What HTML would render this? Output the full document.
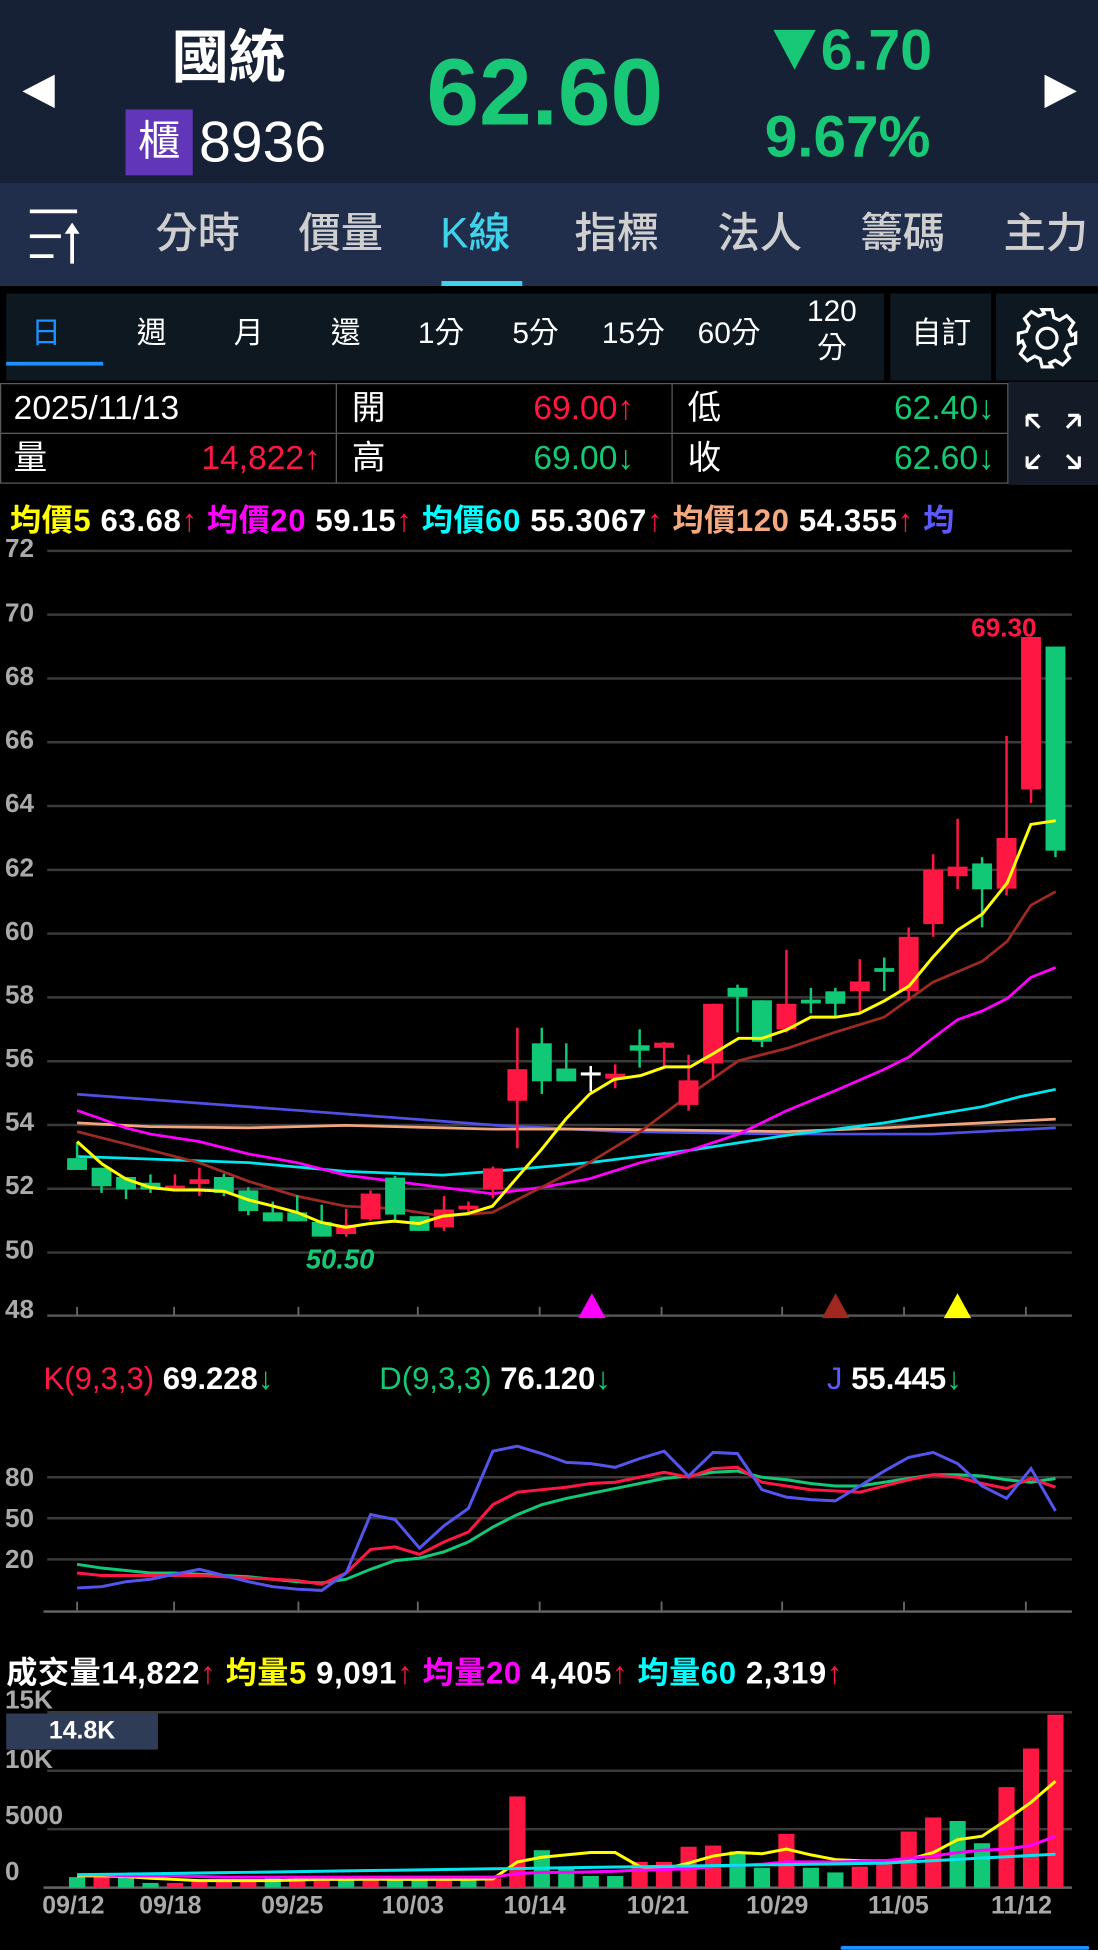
<!DOCTYPE html>
<html><head><meta charset="utf-8">
<style>
*{margin:0;padding:0;box-sizing:border-box}
html,body{width:1098px;height:1950px;background:#000;overflow:hidden}
#root{position:absolute;left:0;top:0;width:883px;height:1568px;transform:scale(1.24349);transform-origin:0 0;background:#000;font-family:"Liberation Sans","Noto Sans CJK TC",sans-serif;color:#fff}
.a{position:absolute;white-space:nowrap}
.hd{left:0;top:0;width:883px;height:147px;background:#172135}
.tb{left:0;top:147px;width:883px;height:83px;background:#202d4b}
.tab{top:164px;font-size:34px;color:#cfcfcf;line-height:48px;font-weight:500}
.sb{top:236px;height:70px;background:#0e1821}
.si{top:253px;font-size:24px;color:#fff;line-height:32px;text-align:center}
.cell{height:41px;border:1px solid #5a5a5a;background:#000;font-size:27px;line-height:39px}
.g{color:#16c874}.r{color:#ff1744}
.yl{font-size:21px;color:#aaa;font-weight:bold;left:4px}
</style></head><body>
<div id="root">
<div class="a hd"></div>
<svg class="a" style="left:18px;top:60px" width="28" height="28"><polygon points="26,0 26,27 0,13.5" fill="#fff"/></svg>
<svg class="a" style="left:838px;top:60px" width="28" height="28"><polygon points="2,0 2,27 28,13.5" fill="#fff"/></svg>
<div class="a" style="left:138px;top:16px;font-size:46px;line-height:60px;font-weight:bold">國統</div>
<div class="a" style="left:101px;top:88px;width:54px;height:53px;background:#6236b8;font-size:34px;line-height:53px;text-align:center">櫃</div>
<div class="a" style="left:160px;top:84px;font-size:46px;line-height:60px;font-weight:500">8936</div>
<div class="a" style="left:343px;top:30px;font-size:76px;line-height:90px;font-weight:bold;color:#19c877">62.60</div>
<svg class="a" style="left:622px;top:22px" width="36" height="36"><polygon points="0,2 34,2 17,34" fill="#19c877"/></svg>
<div class="a" style="left:660px;top:12px;font-size:46px;line-height:56px;font-weight:bold;color:#19c877">6.70</div>
<div class="a" style="left:615px;top:82px;font-size:47px;line-height:56px;font-weight:bold;color:#19c877">9.67%</div>

<div class="a tb"></div>
<svg class="a" style="left:18px;top:168px" width="50" height="45"><g stroke="#fff" stroke-width="3"><line x1="6" y1="2" x2="44" y2="2"/><line x1="6" y1="22" x2="31" y2="22"/><line x1="6" y1="38" x2="25" y2="38"/><line x1="40" y1="16" x2="40" y2="44"/></g><polygon points="34,20 40,11 46,20" fill="#fff"/></svg>
<div class="a tab" style="left:125px">分時</div>
<div class="a tab" style="left:240px">價量</div>
<div class="a tab" style="left:354px;color:#3fd3ea">K線</div>
<div class="a tab" style="left:462px">指標</div>
<div class="a tab" style="left:577px">法人</div>
<div class="a tab" style="left:692px">籌碼</div>
<div class="a tab" style="left:807px">主力</div>
<div class="a" style="left:355px;top:226px;width:65px;height:4px;background:#3fd3ea"></div>

<div class="a sb" style="left:5px;width:706px"></div>
<div class="a sb" style="left:716px;width:81px"></div>
<div class="a sb" style="left:801px;width:82px"></div>
<div class="a si" style="left:25px;color:#1e90ff">日</div>
<div class="a si" style="left:110px">週</div>
<div class="a si" style="left:188px">月</div>
<div class="a si" style="left:266px">還</div>
<div class="a si" style="left:336px">1分</div>
<div class="a si" style="left:412px">5分</div>
<div class="a si" style="left:484px">15分</div>
<div class="a si" style="left:561px">60分</div>
<div class="a" style="left:645px;top:236px;font-size:24px;line-height:30px;text-align:center;width:48px">120<br>分</div>
<div class="a si" style="left:733px">自訂</div>
<div class="a" style="left:5px;top:291px;width:78px;height:3px;background:#1e90ff"></div>
<svg class="a" style="left:816px;top:246px" width="52" height="52" viewBox="0 0 52 52"><g fill="none" stroke="#fff" stroke-width="2.6"><path d="M22 3h8l1.5 6.5 4.5 2 5.8-3.6 5.6 5.6-3.6 5.8 2 4.5L49 22v8l-6.5 1.5-2 4.5 3.6 5.8-5.6 5.6-5.8-3.6-4.5 2L30 49h-8l-1.5-6.5-4.5-2-5.8 3.6-5.6-5.6 3.6-5.8-2-4.5L3 30v-8l6.5-1.5 2-4.5-3.6-5.8 5.6-5.6 5.8 3.6 4.5-2z"/><circle cx="26" cy="26" r="8"/></g></svg>

<div class="a cell" style="left:0;top:308px;width:271px;padding-left:10px">2025/11/13</div>
<div class="a cell" style="left:270px;top:308px;width:271px;padding-left:12px">開<span class="a r" style="right:30px;top:0">69.00↑</span></div>
<div class="a cell" style="left:540px;top:308px;width:271px;padding-left:12px">低<span class="a g" style="right:10px;top:0">62.40↓</span></div>
<div class="a cell" style="left:0;top:348px;width:271px;padding-left:10px">量<span class="a r" style="right:12px;top:0">14,822↑</span></div>
<div class="a cell" style="left:270px;top:348px;width:271px;padding-left:12px">高<span class="a g" style="right:30px;top:0">69.00↓</span></div>
<div class="a cell" style="left:540px;top:348px;width:271px;padding-left:12px">收<span class="a g" style="right:10px;top:0">62.60↓</span></div>
<div class="a" style="left:811px;top:307px;width:72px;height:83px;background:#141b27"></div>
<svg class="a" style="left:822px;top:330px" width="50" height="50"><g stroke="#fff" stroke-width="2.5" fill="none"><path d="M4 4l10 10M4 4v9M4 4h9"/><path d="M46 4l-10 10M46 4v9M46 4h-9"/><path d="M4 46l10-10M4 46v-9M4 46h9"/><path d="M46 46l-10-10M46 46v-9M46 46h-9"/></g></svg>

<div class="a" style="left:8px;top:404px;font-size:25px;line-height:30px;font-weight:bold;letter-spacing:0.5px"><span style="color:#ffff00">均價5</span> 63.68<span class="r">↑</span> <span style="color:#ff00ff">均價20</span> 59.15<span class="r">↑</span> <span style="color:#00ffff">均價60</span> 55.3067<span class="r">↑</span> <span style="color:#f5a97f">均價120</span> 54.355<span class="r">↑</span> <span style="color:#5a5aff">均</span></div>

<svg id="ch" class="a" style="left:0;top:0" width="883" height="1568"></svg>

<div class="a yl" style="top:430px">72</div>
<div class="a yl" style="top:482px">70</div>
<div class="a yl" style="top:533px">68</div>
<div class="a yl" style="top:584px">66</div>
<div class="a yl" style="top:635px">64</div>
<div class="a yl" style="top:687px">62</div>
<div class="a yl" style="top:738px">60</div>
<div class="a yl" style="top:789px">58</div>
<div class="a yl" style="top:840px">56</div>
<div class="a yl" style="top:891px">54</div>
<div class="a yl" style="top:942px">52</div>
<div class="a yl" style="top:994px">50</div>
<div class="a yl" style="top:1042px">48</div>
<div class="a" style="left:781px;top:494px;font-size:21px;font-weight:bold;color:#ff1744">69.30</div>
<div class="a" style="left:246px;top:1000px;font-size:22px;font-weight:bold;font-style:italic;color:#16c874">50.50</div>

<div class="a" style="left:35px;top:1094px;font-size:25px;line-height:30px"><span class="r">K(9,3,3)</span> <b>69.228</b><span class="g">↓</span></div>
<div class="a" style="left:305px;top:1094px;font-size:25px;line-height:30px"><span class="g">D(9,3,3)</span> <b>76.120</b><span class="g">↓</span></div>
<div class="a" style="left:665px;top:1094px;font-size:25px;line-height:30px"><span style="color:#5a5aff">J</span> <b>55.445</b><span class="g">↓</span></div>
<div class="a yl" style="top:1177px">80</div>
<div class="a yl" style="top:1210px">50</div>
<div class="a yl" style="top:1243px">20</div>

<div class="a" style="left:5px;top:1331px;font-size:25px;line-height:30px;font-weight:bold;letter-spacing:0.5px">成交量14,822<span class="r">↑</span> <span style="color:#ffff00">均量5</span> 9,091<span class="r">↑</span> <span style="color:#ff00ff">均量20</span> 4,405<span class="r">↑</span> <span style="color:#00ffff">均量60</span> 2,319<span class="r">↑</span></div>
<div class="a yl" style="top:1356px">15K</div>
<div class="a yl" style="top:1404px">10K</div>
<div class="a yl" style="top:1449px">5000</div>
<div class="a yl" style="top:1494px">0</div>
<div class="a" style="left:5px;top:1378px;width:122px;height:29px;background:#2e3c57;color:#fff;font-size:20px;font-weight:bold;line-height:29px;text-align:center">14.8K</div>
<div class="a" style="left:0;top:1520px;width:883px;font-size:20px;font-weight:bold;color:#aaa;line-height:26px">
<span class="a" style="left:34px">09/12</span><span class="a" style="left:112px">09/18</span><span class="a" style="left:210px">09/25</span><span class="a" style="left:307px">10/03</span><span class="a" style="left:405px">10/14</span><span class="a" style="left:504px">10/21</span><span class="a" style="left:600px">10/29</span><span class="a" style="left:698px">11/05</span><span class="a" style="left:797px">11/12</span></div>
<div class="a" style="left:676px;top:1565px;width:200px;height:3px;background:#1e90ff;border-radius:2px"></div>
</div>
<script>
(function(){
var X=function(i){return 62+i*19.67};
var P=function(p){return 443+(72-p)*25.65};
var s='';
for(var v=72;v>=50;v-=2){s+='<line x1="38" x2="862" y1="'+P(v)+'" y2="'+P(v)+'" stroke="#3a3a3a" stroke-width="2"/>';}
s+='<line x1="38" x2="862" y1="1058" y2="1058" stroke="#555" stroke-width="2"/>';
var tk=[62,140,240,336,434,532,629,727,825];
tk.forEach(function(x){s+='<line x1="'+x+'" x2="'+x+'" y1="1051" y2="1058" stroke="#666" stroke-width="1.5"/>';});
function pl(pts,c,w){s+='<polyline fill="none" stroke="'+c+'" stroke-width="'+(w||2.2)+'" points="'+pts+'"/>';}
pl("62,880 240,893 400,905 500,910 633,912 750,912 849,907","#5050e6");
pl("62,903 120,906 200,907 278,905 396,908 474,908 633,910 711,907 790,903 849,900","#f0a57c");
pl("62,930 200,935 278,942 356,945 396,942 474,935 555,925 633,913 711,903 790,890 820,882 849,876","#00e5ee");
pl("62,893 82,900 101,907 121,912 160,918 200,928 239,935 278,945 317,950 356,955 396,960 435,955 474,948 515,935 555,925 594,912 633,893 672,877 711,860 731,850 750,835 770,820 790,813 810,803 829,786 849,778","#ff00ff");
pl("62,910 121,925 160,935 200,950 239,962 278,970 317,972 356,978 396,975 435,955 474,935 515,910 555,880 594,853 633,843 672,830 711,818 750,790 790,773 810,757 829,728 849,717","#9e2a22");
var C=[[52.96,53.45,52.59,52.59],[52.66,52.66,51.87,52.08],[52.37,52.37,51.68,51.98],[52.19,52.45,51.87,51.98],[52.0,52.45,51.98,52.05],[52.2,52.66,51.77,52.25],[52.37,52.47,51.77,51.87],[51.95,52.05,51.17,51.3],[51.26,51.6,50.98,50.98],[51.26,51.8,50.98,50.98],[50.96,51.5,50.5,50.5],[50.58,51.37,50.5,50.87],[51.05,51.95,51.0,51.85],[52.35,52.4,51.0,51.19],[51.14,51.14,50.68,50.68],[50.79,51.77,50.68,51.35],[51.35,51.6,51.17,51.47],[51.98,52.7,51.7,52.64],[54.76,57.05,53.27,55.75],[56.56,57.05,54.97,55.37],[55.77,56.56,55.37,55.37],[55.6,55.85,55.05,55.6],[55.5,55.9,55.15,55.56],[56.5,57.0,55.8,56.33],[56.42,56.6,55.8,56.58],[54.63,56.2,54.45,55.4],[55.93,57.8,55.42,57.8],[58.3,58.4,56.9,58.02],[57.91,57.91,56.44,56.61],[57.0,59.49,56.9,57.8],[57.88,58.3,57.5,57.86],[58.19,58.3,57.4,57.8],[58.2,59.2,57.5,58.5],[58.87,59.25,58.2,58.85],[58.2,60.19,57.9,59.9],[60.3,62.49,59.9,62.0],[61.8,63.6,61.4,62.1],[62.2,62.4,60.2,61.39],[61.41,66.2,61.2,63.0],[64.52,69.3,64.1,69.3],[69.0,69.0,62.4,62.6]];
C.forEach(function(c,i){var x=X(i),o=c[0],h=c[1],l=c[2],cl=c[3];var col=cl>o?'#ff1744':(cl<o?'#10c875':'#fff');if(i==21)col='#fff';
s+='<line x1="'+x+'" x2="'+x+'" y1="'+P(h)+'" y2="'+P(l)+'" stroke="'+col+'" stroke-width="2"/>';
var t=P(Math.max(o,cl)),b=P(Math.min(o,cl));if(b-t<2.5){t-=1.25;b+=1.25;}
s+='<rect x="'+(x-8)+'" y="'+t+'" width="16" height="'+(b-t)+'" fill="'+col+'"/>';});
pl("62,918 82,936 101,948 121,955 140,957 160,957 180,958 200,965 220,970 239,975 258,983 278,987 297,984 317,982 337,984 356,978 376,976 396,970 415,948 435,925 455,900 474,880 494,868 515,865 535,858 555,858 574,847 594,835 613,835 633,828 652,818 672,818 691,815 711,805 731,793 750,770 770,748 790,735 810,710 829,663 849,660","#ffff00",2.4);
function tri(x,c){s+='<polygon points="'+(x-11)+',1060 '+(x+11)+',1060 '+x+',1040" fill="'+c+'"/>';}
tri(476,'#ff00ff');tri(672,'#a0281f');tri(770,'#ffff00');
[1188,1221,1254].forEach(function(y){s+='<line x1="38" x2="862" y1="'+y+'" y2="'+y+'" stroke="#3a3a3a" stroke-width="2"/>';});
s+='<line x1="35" x2="862" y1="1296" y2="1296" stroke="#666" stroke-width="2"/>';
tk.forEach(function(x){s+='<line x1="'+x+'" x2="'+x+'" y1="1288" y2="1296" stroke="#666" stroke-width="1.5"/>';});
function kl(a,c){var p=a.map(function(y,i){return X(i)+','+y}).join(' ');pl(p,c,2.4);}
kl([1258,1261,1263,1265,1265,1266,1267,1268,1270,1272,1273,1270,1262,1255,1253,1248,1240,1228,1218,1210,1205,1201,1197,1193,1189,1187,1184,1183,1188,1190,1193,1195,1195,1192,1189,1186,1186,1187,1190,1192,1189],'#10c875');
kl([1265,1267,1267,1267,1267,1267,1268,1269,1270,1271,1274,1265,1246,1244,1250,1240,1232,1210,1200,1198,1196,1193,1192,1188,1184,1188,1181,1180,1192,1195,1198,1199,1200,1195,1190,1186,1188,1193,1197,1189,1196],'#ff1744');
kl([1277,1276,1272,1270,1266,1262,1267,1272,1276,1278,1279,1265,1218,1222,1245,1227,1213,1167,1163,1169,1176,1177,1180,1173,1167,1187,1168,1169,1198,1204,1206,1207,1195,1183,1172,1168,1177,1195,1205,1181,1215],'#5555ee');
[1377,1424,1471].forEach(function(y){s+='<line x1="38" x2="862" y1="'+y+'" y2="'+y+'" stroke="#3a3a3a" stroke-width="2"/>';});
s+='<line x1="35" x2="862" y1="1518" y2="1518" stroke="#666" stroke-width="2"/>';
var V=[[.9,0],[1.1,1],[.9,0],[.4,0],[.4,1],[.6,1],[.7,1],[.7,1],[.8,0],[.7,1],[.7,1],[.8,0],[.8,1],[.7,0],[.7,0],[.7,1],[.6,0],[.8,1],[7.8,1],[3.2,0],[1.8,0],[1.0,0],[1.0,0],[2.2,1],[2.2,1],[3.5,1],[3.6,1],[3.1,0],[1.7,0],[4.6,1],[1.7,0],[1.3,0],[1.8,1],[2.0,1],[4.8,1],[6.0,1],[5.7,0],[3.8,0],[8.6,1],[11.9,1],[14.8,1]];
V.forEach(function(v,i){var h=v[0]*9.4;s+='<rect x="'+(X(i)-6.5)+'" y="'+(1518-h)+'" width="13" height="'+h+'" fill="'+(v[1]?'#ff1744':'#10c875')+'"/>';});
var Y5=[1.0,1.0,0.95,0.8,0.7,0.6,0.6,0.6,0.6,0.65,0.7,0.7,0.72,0.7,0.7,0.7,0.7,0.75,2.2,2.6,2.8,3.0,3.0,1.8,1.6,2.1,2.7,3.0,2.9,3.3,2.8,2.4,2.3,2.3,2.4,3.0,4.1,4.4,5.8,7.3,9.1];
var Y20=[1.1,1.1,1.0,1.0,1.0,0.95,0.9,0.9,0.9,0.9,0.9,0.9,0.9,0.9,0.9,0.9,0.9,0.9,1.2,1.3,1.3,1.35,1.4,1.5,1.55,1.6,1.8,1.9,2.0,2.2,2.2,2.2,2.25,2.3,2.5,2.7,3.0,3.2,3.3,3.6,4.4];
var Y60=Y20.map(function(v,i){return 1.1+i*0.03+(i>33?(i-33)*0.08:0)});
function vl(a,c){pl(a.map(function(v,i){return X(i)+','+(1518-v*9.4)}).join(' '),c,2.4);}
vl(Y5,'#ffff00');vl(Y20,'#ff00ff');vl(Y60,'#00e5ee');
document.getElementById('ch').innerHTML=s;
})();
</script>
</body></html>
